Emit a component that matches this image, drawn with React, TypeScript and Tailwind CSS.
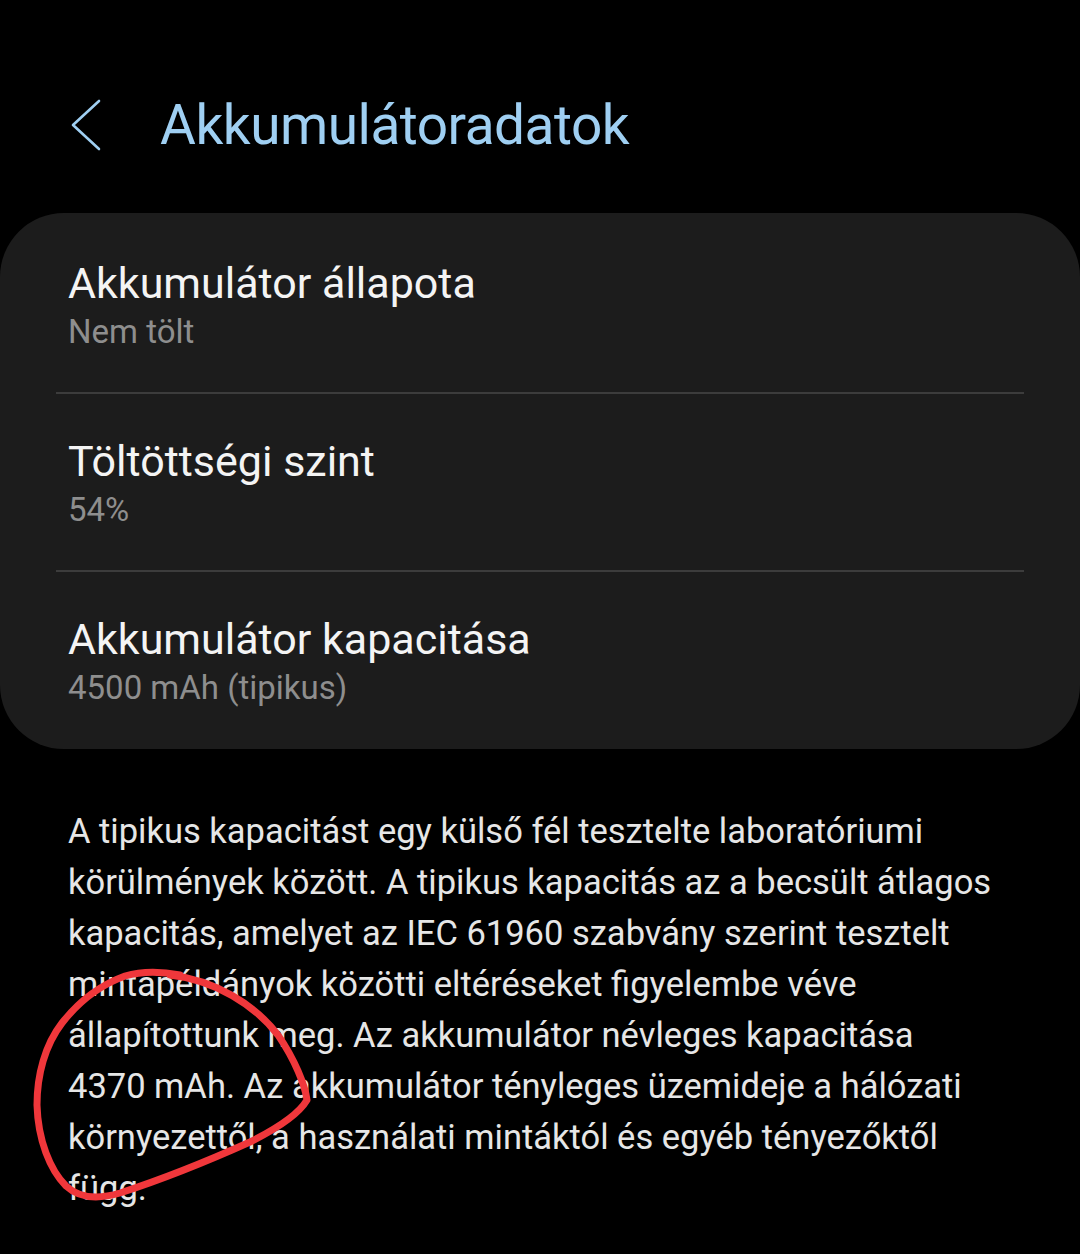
type Row = {
    title: string
    value: string
}

const rows: Row[] = [
    { title: "Akkumulátor állapota", value: "Nem tölt" },
    { title: "Töltöttségi szint", value: "54%" },
    { title: "Akkumulátor kapacitása", value: "4500 mAh (tipikus)" },
]

// the note keeps the phone's own line breaks
const noteLines = [
    "A tipikus kapacitást egy külső fél tesztelte laboratóriumi",
    "körülmények között. A tipikus kapacitás az a becsült átlagos",
    "kapacitás, amelyet az IEC 61960 szabvány szerint tesztelt",
    "mintapéldányok közötti eltéréseket figyelembe véve",
    "állapítottunk meg. Az akkumulátor névleges kapacitása",
    "4370 mAh. Az akkumulátor tényleges üzemideje a hálózati",
    "környezettől, a használati mintáktól és egyéb tényezőktől",
    "függ.",
]

function InfoRow({ row, last }: { row: Row; last: boolean }) {
    return (
        <div>
            <div className="px-[68px] py-[40px]">
                <p className="text-[43px] leading-[54px] text-[#f4f4f4]">{row.title}</p>
                <p className="pt-[2px] text-[33px] leading-[40px] text-[#8e8e8e]">{row.value}</p>
            </div>
            {!last && <div className="mx-[56px] h-[2px] bg-[#3c3c3c]" />}
        </div>
    )
}

export default function App() {
    return (
        <div
            className="relative w-[1080px] h-[1254px] overflow-hidden bg-black"
            style={{ fontFamily: "Roboto, 'Noto Sans', sans-serif" }}
        >
            {/* header */}
            <div className="mt-[88px] flex h-[74px] items-center">
                <svg className="ml-[70px]" width="32" height="52" viewBox="0 0 32 52">
                    <polyline
                        points="29,2 3,26 29,50"
                        fill="none"
                        stroke="#9fcff2"
                        strokeWidth="2.6"
                        strokeLinecap="round"
                        strokeLinejoin="round"
                    />
                </svg>
                <h1 className="ml-[58px] text-[55px] leading-[74px] tracking-[-0.5px] text-[#9fcff2]">
                    Akkumulátoradatok
                </h1>
            </div>

            {/* info card */}
            <div className="mt-[51px] rounded-[64px] bg-[#1c1c1c] pt-[3px] pb-[1px]">
                {rows.map((row, i) => (
                    <InfoRow key={row.title} row={row} last={i === rows.length - 1} />
                ))}
            </div>

            <div className="mt-[57px] px-[68px] text-[34.5px] leading-[51px] text-[#e6e6e6]">
                {noteLines.map(line => (
                    <p key={line} className="whitespace-nowrap">{line}</p>
                ))}
            </div>

            {/* hand-drawn mark */}
            <svg className="pointer-events-none absolute left-0 top-0" width="1080" height="1254" viewBox="0 0 1080 1254">
                <path
                    d="M170 975 C 215 980 255 1005 278 1035 C 295 1060 305 1085 307 1100 C 300 1112 280 1127 250 1142 C 210 1160 160 1180 120 1193 C 100 1199 80 1199 66 1186 C 50 1170 38 1140 37 1105 C 37 1075 45 1045 62 1023 C 80 1000 100 985 125 976 C 145 970 165 972 180 975"
                    fill="none"
                    stroke="#f0373b"
                    strokeWidth="7"
                    strokeLinecap="round"
                    strokeLinejoin="round"
                />
            </svg>
        </div>
    )
}
